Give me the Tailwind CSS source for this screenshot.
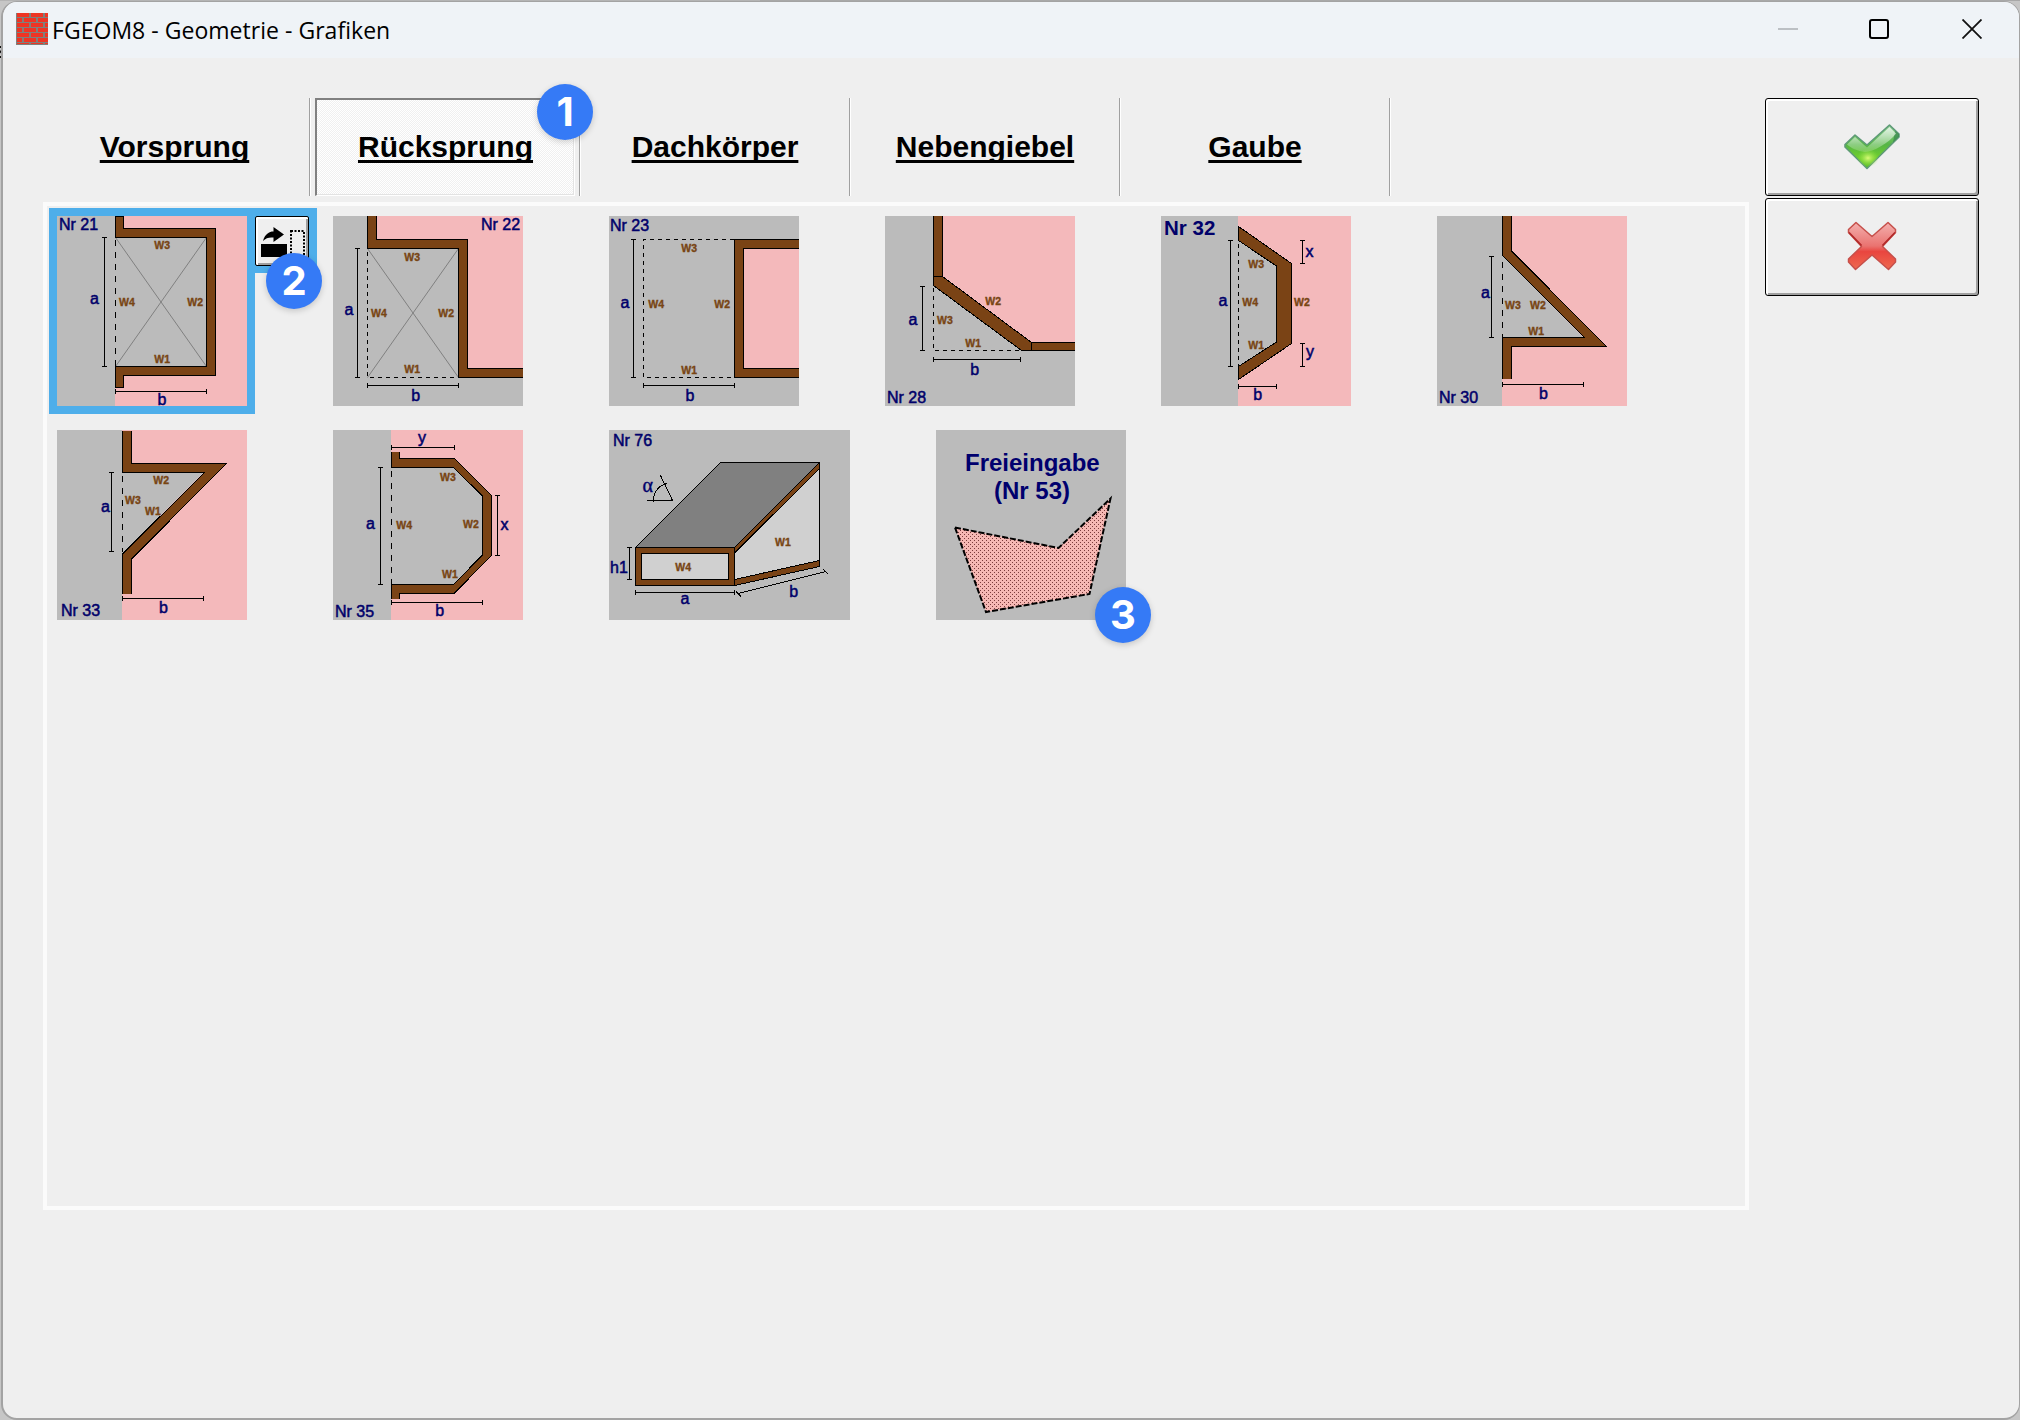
<!DOCTYPE html>
<html lang="de">
<head>
<meta charset="utf-8">
<title>FGEOM8 - Geometrie - Grafiken</title>
<script src="https://cdn.jsdelivr.net/npm/@tailwindcss/browser@4"></script>
</head>
<body class="w-[2020px] h-[1420px] pt-px overflow-hidden bg-[#c6c6c6] font-['Liberation_Sans',sans-serif] text-black relative">

<svg class="absolute left-0 top-0" width="2020" height="1420">
  <path d="M0 .5H760" stroke="#b4b4b4"/><path d="M760 .5H2020" stroke="#a8a8a8"/>
  <path d="M0 47h3M0 51l3 3M0 57h3" stroke="#111" stroke-width="2"/>
</svg>

<div class="relative ml-px w-[2019px] h-[1419px] border-2 border-r border-t border-[#a3a3a3] rounded-[16px] bg-[#efefef] overflow-hidden">

  <!-- title bar -->
  <header class="h-14 flex items-center justify-between bg-[#eff3f7] pl-[13px] pr-[37px] pb-0.5">
    <div class="flex items-center gap-1">
      <svg width="32" height="32" viewBox="0 0 32 32" shape-rendering="crispEdges">
        <defs><pattern id="bricks" width="14" height="10" patternUnits="userSpaceOnUse">
          <rect width="14" height="10" fill="#80807c"/>
          <rect x="1" y="0" width="12" height="4" fill="#ee3524"/>
          <rect x="-1" y="5" width="7" height="4" fill="#ee3524"/><rect x="8" y="5" width="7" height="4" fill="#ee3524"/>
        </pattern></defs>
        <rect width="32" height="32" fill="url(#bricks)"/>
        <path d="M.5 0V32M0 31.500H32" stroke="#80807c"/>
      </svg>
      <h1 class="font-['Open_Sans',sans-serif] text-[23px] leading-8 whitespace-nowrap tracking-[0.03px] pt-0.5">FGEOM8 - Geometrie - Grafiken</h1>
    </div>
    <div class="flex items-center gap-[73px]">
      <svg class="-mr-0.5" width="20" height="20"><path d="M0 10H20" stroke="#bcc0c4" stroke-width="2"/></svg>
      <svg width="20" height="20"><rect x="1" y="1" width="18" height="18" rx="2" fill="none" stroke="#000" stroke-width="2"/></svg>
      <svg width="20" height="20"><path d="M.5 .5 19.500 19.500M19.500 .5 .5 19.500" stroke="#111" stroke-width="1.800"/></svg>
    </div>
  </header>

  <main class="flex pt-10 pl-[38px]">
    <div>
      <nav class="flex h-[98px] text-[30px] font-bold underline-offset-[3px] decoration-[3px] [text-decoration-skip-ink:none]">
        <div class="w-[270px] border-r border-white"><div class="h-full border-r border-[#a0a0a0] flex items-center justify-center pb-0.5 pr-px"><span class="underline underline-offset-[3px] decoration-[3px]">Vorsprung</span></div></div>
        <div class="w-[270px] border-r border-white relative"><div class="h-full border-r border-[#a0a0a0] pl-1 pr-1">
          <div class="h-full border-t-2 border-l-2 border-r border-b border-t-[#808080] border-l-[#808080] border-r-white border-b-white">
            <div class="h-full border-r border-b border-[#e3e3e3] bg-[repeating-conic-gradient(#ffffff_0%_25%,#f0f0f0_0%_50%)] bg-[length:2px_2px] flex items-center justify-center pl-px pb-px"><span class="underline underline-offset-[3px] decoration-[3px]">Rücksprung</span></div>
          </div></div>
          <div class="absolute left-[226px] -top-[14px] size-14 rounded-full bg-[#357af6] shadow-[0_2px_6px_rgba(0,0,0,0.18)] flex items-center justify-center text-white text-[40px] leading-none font-bold font-['Inter',sans-serif] z-10">1</div>
        </div>
        <div class="w-[270px] border-r border-white"><div class="h-full border-r border-[#a0a0a0] flex items-center justify-center pb-0.5"><span class="underline underline-offset-[3px] decoration-[3px]">Dachkörper</span></div></div>
        <div class="w-[270px] border-r border-white"><div class="h-full border-r border-[#a0a0a0] flex items-center justify-center pb-0.5"><span class="underline underline-offset-[3px] decoration-[3px]">Nebengiebel</span></div></div>
        <div class="w-[270px] border-r border-white"><div class="h-full border-r border-[#a0a0a0] flex items-center justify-center pb-0.5"><span class="underline underline-offset-[3px] decoration-[3px]">Gaube</span></div></div>
      </nav>

      <section class="mt-1.5 ml-0.5 w-[1706px] h-[1008px] border-4 border-[#fbfbfb] p-2.5 flex flex-col gap-6">
        <div class="flex gap-[86px]">

          <div class="relative size-[190px]">
            <!-- selection frame with mirror button -->
            <div class="absolute -left-2 -top-2 size-[206px] bg-[#4eaeea]"></div>
            <div class="absolute left-[198px] -top-2 w-[62px] h-[65px] bg-[#4eaeea]"></div>
            <div class="absolute left-[198px] top-0 w-[54px] h-[50px] border border-black rounded-[2px] bg-[#efefef] shadow-[inset_2px_2px_0_#fff,inset_-2px_-2px_0_#a0a0a0]">
              <svg width="52" height="48" viewBox="0 0 52 48">
                <path d="M7 24C9 17 13 14.500 17.500 14.500V10L28 17.500 17.500 25V20.500C13 20 10 21 7 24Z"/>
                <rect x="5" y="27" width="26" height="13"/>
                <path d="M35 14H48V42H35Z" fill="none" stroke="#000" stroke-width="2" stroke-dasharray="2 1.500"/>
              </svg>
            </div>
            <svg class="relative overflow-visible" width="190" height="190" viewBox="0 0 190 190">
              <rect width="190" height="190" fill="#f4b9bb"/><rect width="58" height="190" fill="#bbb"/><rect x="58" y="21" width="92" height="130" fill="#bbb"/>
              <path d="M58.500 21.500 149.500 150.500M149.500 21.500 58.500 150.500" stroke="#808080"/>
              <g stroke="#000" fill="none" shape-rendering="crispEdges">
                <path fill="#7a4315" d="M58.500 0V21.500H149.500V150.500H58.500V171H66.500V159.500H158.500V12.500H66.500V0Z"/>
                <path d="M58.500 24V150" stroke-dasharray="6 6"/>
                <path d="M47.500 21.500V150.500M45 21.500h5M45 150.500h5M58.500 175.500H149.500M58.500 173v5M149.500 173v5"/>
              </g>
              <g class="text-[16px] fill-[#00006a] stroke-[#00006a] [stroke-width:0.5px]"><text x="2" y="14">Nr 21</text><text x="33" y="88">a</text><text x="100.500" y="188.500">b</text></g>
              <g class="text-[10.5px] font-bold fill-[#784514] stroke-[#784514] [stroke-width:0.35px]"><text x="97.300" y="33">W3</text><text x="62" y="90">W4</text><text x="130.300" y="90">W2</text><text x="97.300" y="147">W1</text></g>
            </svg>
            <div class="absolute left-[209px] top-[37px] size-14 rounded-full bg-[#357af6] shadow-[0_2px_6px_rgba(0,0,0,0.18)] flex items-center justify-center text-white text-[40px] leading-none font-bold font-['Inter',sans-serif] z-10">2</div>
          </div>

          <svg width="190" height="190" viewBox="0 0 190 190">
            <rect width="190" height="190" fill="#bbb"/><path d="M43 0H190V153H134V24H43Z" fill="#f4b9bb"/>
            <path d="M34.500 32.500 125.500 161.500M125.500 32.500 34.500 161.500" stroke="#808080"/>
            <g stroke="#000" fill="none" shape-rendering="crispEdges">
              <path fill="#7a4315" d="M34.500 -1V32.500H125.500V161.500H191V152.500H134.500V23.500H43.500V-1Z"/>
              <path d="M34.500 36V161.500H125" stroke-dasharray="4 4"/>
              <path d="M24.500 32.500V161.500M22 32.500h5M22 161.500h5M34.500 169.500H125.500M34.500 167v5M125.500 167v5"/>
            </g>
            <g class="text-[16px] fill-[#00006a] stroke-[#00006a] [stroke-width:0.5px]"><text x="148" y="14">Nr 22</text><text x="11.500" y="99">a</text><text x="78.300" y="185">b</text></g>
            <g class="text-[10.5px] font-bold fill-[#784514] stroke-[#784514] [stroke-width:0.35px]"><text x="71.300" y="45">W3</text><text x="38" y="101">W4</text><text x="105.300" y="101">W2</text><text x="71.300" y="157">W1</text></g>
          </svg>

          <svg width="190" height="190" viewBox="0 0 190 190">
            <rect width="190" height="190" fill="#bbb"/><rect x="134" y="32" width="56" height="121" fill="#f4b9bb"/>
            <g stroke="#000" fill="none" shape-rendering="crispEdges">
              <path fill="#7a4315" d="M191 23.500H125.500V161.500H191V152.500H134.500V32.500H191Z"/>
              <path d="M125 23.500H34.500V161.500H125" stroke-dasharray="4 4"/>
              <path d="M24.500 23.500V161.500M22 23.500h5M22 161.500h5M34.500 169.500H125.500M34.500 167v5M125.500 167v5"/>
            </g>
            <g class="text-[16px] fill-[#00006a] stroke-[#00006a] [stroke-width:0.5px]"><text x="1" y="15">Nr 23</text><text x="11.500" y="92">a</text><text x="76.500" y="185">b</text></g>
            <g class="text-[10.5px] font-bold fill-[#784514] stroke-[#784514] [stroke-width:0.35px]"><text x="72.300" y="36">W3</text><text x="39.300" y="92">W4</text><text x="105.300" y="92">W2</text><text x="72.300" y="158">W1</text></g>
          </svg>

          <svg width="190" height="190" viewBox="0 0 190 190">
            <rect width="190" height="190" fill="#bbb"/><path d="M57 0H190V127H146L57 61Z" fill="#f4b9bb"/>
            <g stroke="#000" fill="none" shape-rendering="crispEdges">
              <path fill="#7a4315" d="M48.500 -1V60.500H57.500V-1ZM48.500 60.500H57.500L146.500 126.500V134.500H136.500L48.500 69.500ZM191 126.500H146.500V134.500H191Z"/>
              <path d="M48.500 72V134.500H136" stroke-dasharray="4 4"/>
              <path d="M37.500 70.500V134.500M35 70.500h5M35 134.500h5M48.500 143.500H135.500M48.500 141v5M135.500 141v5"/>
            </g>
            <g class="text-[16px] fill-[#00006a] stroke-[#00006a] [stroke-width:0.5px]"><text x="2" y="186.500">Nr 28</text><text x="23.500" y="109">a</text><text x="85.300" y="159">b</text></g>
            <g class="text-[10.5px] font-bold fill-[#784514] stroke-[#784514] [stroke-width:0.35px]"><text x="52" y="108">W3</text><text x="100.300" y="89">W2</text><text x="80.300" y="131">W1</text></g>
          </svg>

          <svg width="190" height="190" viewBox="0 0 190 190">
            <rect width="190" height="190" fill="#f4b9bb"/><rect width="77" height="190" fill="#bbb"/><path d="M77 24 116 50V126L77 151Z" fill="#bbb"/>
            <g stroke="#000" fill="none" shape-rendering="crispEdges">
              <path fill="#7a4315" d="M77.500 10.500 130.500 47.500V127.500L77.500 163.500V150.500L115.500 126V50L77.500 24.500Z"/>
              <path d="M77.500 28V150" stroke-dasharray="4 4"/>
              <path d="M69.500 24.500V150.500M67 24.500h5M67 150.500h5M77.500 170.500H115.500M77.500 168v5M115.500 168v5M141.500 24.500V47.500M139 24.500h5M139 47.500h5M141.500 127.500V150.500M139 127.500h5M139 150.500h5"/>
            </g>
            <text class="text-[20.5px] font-bold fill-[#00006a]" x="3" y="19">Nr 32</text>
            <g class="text-[16px] fill-[#00006a] stroke-[#00006a] [stroke-width:0.5px]"><text x="57.500" y="90">a</text><text x="144.500" y="41">x</text><text x="145" y="141">y</text><text x="92.300" y="184">b</text></g>
            <g class="text-[10.5px] font-bold fill-[#784514] stroke-[#784514] [stroke-width:0.35px]"><text x="87.300" y="52">W3</text><text x="81.300" y="90">W4</text><text x="133" y="90">W2</text><text x="87.300" y="133">W1</text></g>
          </svg>

          <svg width="190" height="190" viewBox="0 0 190 190">
            <rect width="190" height="190" fill="#f4b9bb"/><rect width="65" height="190" fill="#bbb"/><path d="M65 39 147 122H65Z" fill="#bbb"/>
            <path fill="#7a4315" shape-rendering="crispEdges" d="M65.500 0V39.500L147.500 121.500H65.500V163H74.500V130.500H169.500L74.500 35V0Z"/>
            <g stroke="#000" fill="none" shape-rendering="crispEdges">
              <path d="M65.500 0V39.500L147.500 121.500H65.500V163M74.500 163V130.500H169.500L74.500 35V0"/>
              <path d="M65.500 46V121" stroke-dasharray="6 6"/>
              <path d="M54.500 40.500V121.500M52 40.500h5M52 121.500h5M65.500 168.500H146.500M65.500 166v5M146.500 166v5"/>
            </g>
            <g class="text-[16px] fill-[#00006a] stroke-[#00006a] [stroke-width:0.5px]"><text x="44" y="82">a</text><text x="102" y="183">b</text><text x="2" y="186.500">Nr 30</text></g>
            <g class="text-[10.5px] font-bold fill-[#784514] stroke-[#784514] [stroke-width:0.35px]"><text x="68" y="93">W3</text><text x="93" y="93">W2</text><text x="91.300" y="119">W1</text></g>
          </svg>
        </div>

        <div class="flex gap-[86px]">
          <svg width="190" height="190" viewBox="0 0 190 190">
            <rect width="190" height="190" fill="#f4b9bb"/><rect width="65" height="190" fill="#bbb"/><path d="M65 42H147L65 124Z" fill="#bbb"/>
            <path fill="#7a4315" shape-rendering="crispEdges" d="M65.500 1V42.500H147.500L65.500 124V164H74.500V129L169.500 33.500H74.500V1Z"/>
            <g stroke="#000" fill="none" shape-rendering="crispEdges">
              <path d="M65.500 1V42.500H147.500L65.500 124V164M74.500 164V129L169.500 33.500H74.500V1"/>
              <path d="M65.500 46V122" stroke-dasharray="6 6"/>
              <path d="M54.500 42.500V121.500M52 42.500h5M52 121.500h5M65.500 168.500H146.500M65.500 166v5M146.500 166v5"/>
            </g>
            <g class="text-[16px] fill-[#00006a] stroke-[#00006a] [stroke-width:0.5px]"><text x="44" y="82">a</text><text x="102" y="183">b</text><text x="4" y="185.500">Nr 33</text></g>
            <g class="text-[10.5px] font-bold fill-[#784514] stroke-[#784514] [stroke-width:0.35px]"><text x="96.300" y="54">W2</text><text x="68" y="73.500">W3</text><text x="88" y="84.500">W1</text></g>
          </svg>

          <svg class="overflow-visible" width="190" height="190" viewBox="0 0 190 190">
            <rect width="190" height="190" fill="#f4b9bb"/><rect width="58" height="190" fill="#bbb"/><path d="M58 37H121L150 66V125L121 155H58Z" fill="#bbb"/>
            <path fill="#7a4315" shape-rendering="crispEdges" d="M58.500 22H66.500V28.500H121.500L158.500 65.500V125.500L121 163.500H66.500V169H58.500V154.500H120.500L149.500 125V66L120.500 37.500H58.500Z"/>
            <g stroke="#000" fill="none" shape-rendering="crispEdges">
              <path d="M66.500 22V28.500H121.500L158.500 65.500V125.500L121 163.500H66.500V169M58.500 169V154.500H120.500L149.500 125V66L120.500 37.500H58.500V22"/>
              <path d="M58.500 41V154" stroke-dasharray="6 6"/>
              <path d="M47.500 37.500V154.500M45 37.500h5M45 154.500h5M58.500 172.500H149.500M58.500 170v5M149.500 170v5M58.500 17.500H121.500M58.500 15v5M121.500 15v5M164.500 65.500V125.500M162 65.500h5M162 125.500h5"/>
            </g>
            <g class="text-[16px] fill-[#00006a] stroke-[#00006a] [stroke-width:0.5px]"><text x="85" y="12.500">y</text><text x="33" y="99">a</text><text x="167.500" y="100">x</text><text x="102.300" y="186">b</text><text x="2" y="186.500">Nr 35</text></g>
            <g class="text-[10.5px] font-bold fill-[#784514] stroke-[#784514] [stroke-width:0.35px]"><text x="107" y="51">W3</text><text x="63.300" y="99">W4</text><text x="130" y="98">W2</text><text x="109" y="147.500">W1</text></g>
          </svg>

          <svg width="241" height="190" viewBox="0 0 241 190">
            <rect width="241" height="190" fill="#bbb"/>
            <g stroke="#000" fill="none" shape-rendering="crispEdges">
              <path fill="#808080" d="M26.500 117.500 111.500 32.500H210.500L125.500 117.500Z"/>
              <path fill="#d0d0d0" d="M125.500 122 210.500 38V131L125.500 150Z"/>
              <path fill="#7a4315" d="M125.500 117.500 210.500 32.500V38.500L125.500 123ZM125.500 149.500 210.500 130.500V136.500L125.500 155.500Z"/>
              <path fill="#7a4315" d="M26.500 117.500H125.500V155.500H26.500Z"/>
              <path fill="#d0d0d0" d="M32.500 123.500H119.500V149.500H32.500Z"/>
              <path d="M20.500 117.500V149.500M18 117.500h5M18 149.500h5M26.500 162.500H125.500M26.500 160v5M125.500 160v5M129 163.500 217 141.500M127 161.500l5 5M214.500 139.500l5 5"/>
              <path d="M38 70.500H63.500L51.500 45.500M44.500 72C44 62 50 55 58.500 53.500"/>
            </g>
            <text class="text-[20px] font-['Liberation_Serif',serif] fill-[#00006a] stroke-[#00006a] [stroke-width:0.4px]" x="33.500" y="61.500">α</text>
            <g class="text-[16px] fill-[#00006a] stroke-[#00006a] [stroke-width:0.5px]"><text x="4" y="15.500">Nr 76</text><text x="1" y="143">h1</text><text x="71.500" y="173.500">a</text><text x="180.300" y="167">b</text></g>
            <g class="text-[10.5px] font-bold fill-[#784514] stroke-[#784514] [stroke-width:0.35px]"><text x="166" y="115.500">W1</text><text x="66.300" y="140.500">W4</text></g>
          </svg>

          <div class="relative">
            <svg width="190" height="190" viewBox="0 0 190 190">
              <defs><pattern id="dots" width="4" height="4" patternUnits="userSpaceOnUse">
                <rect width="4" height="4" fill="#f6b8b4"/><rect width="1" height="1" fill="#7a3c3c"/><rect x="2" y="2" width="1" height="1" fill="#7a3c3c"/>
              </pattern></defs>
              <rect width="190" height="190" fill="#bbb"/>
              <path d="M19 97.500 122.500 118 174.500 68.500 153.500 164 50 182Z" fill="url(#dots)" stroke="#000" stroke-width="2" stroke-dasharray="6 2"/>
              <g class="text-[24px] font-bold fill-[#00006e]"><text x="29" y="41">Freieingabe</text><text x="58" y="69">(Nr 53)</text></g>
            </svg>
            <div class="absolute left-[159px] top-[157px] size-14 rounded-full bg-[#357af6] shadow-[0_2px_6px_rgba(0,0,0,0.18)] flex items-center justify-center text-white text-[40px] leading-none font-bold font-['Inter',sans-serif]">3</div>
          </div>
        </div>
      </section>
    </div>

    <div class="ml-4 flex flex-col gap-0.5">
      <button class="w-[214px] h-[98px] border border-black rounded-[3px] shadow-[inset_2px_2px_0_#fff,inset_-2px_-2px_0_#a0a0a0] flex items-center justify-center pr-px" aria-label="OK">
        <svg width="58" height="48" viewBox="0 0 58 48">
          <defs>
            <linearGradient id="gr" x1="0" y1="0" x2="0" y2="1"><stop offset="0" stop-color="#8fcf96"/><stop offset=".45" stop-color="#55b545"/><stop offset=".75" stop-color="#6fcf2c"/><stop offset="1" stop-color="#58b82c"/></linearGradient>
            <radialGradient id="gl"><stop offset="0" stop-color="#d8fa78"/><stop offset="1" stop-color="#8ae03a" stop-opacity="0"/></radialGradient>
            <linearGradient id="gs" x1="0" y1="0" x2="0" y2="1"><stop offset="0" stop-color="#fff" stop-opacity=".75"/><stop offset="1" stop-color="#fff" stop-opacity=".15"/></linearGradient>
          </defs>
          <path d="M2 21.500 12 12 24 22 46.500 2 56 11V14L24 45.500 2 24Z" fill="url(#gr)" stroke="#5f9a78" stroke-width="1.600" stroke-linejoin="round"/>
          <path d="M50 19.500 56 13.500V11L52 8Z" fill="#2f7d48" opacity=".6"/>
          <ellipse cx="25" cy="35" rx="11" ry="9" fill="url(#gl)"/>
          <path d="M4 21.500 12 14 24 24.500 46.500 4 53 10.500C46 20 30 29 22 29 14 28 8 25 4 21.500Z" fill="url(#gs)"/>
        </svg>
      </button>
      <button class="w-[214px] h-[98px] border border-black rounded-[3px] shadow-[inset_2px_2px_0_#fff,inset_-2px_-2px_0_#a0a0a0] flex items-center justify-center pb-0.5 pr-px" aria-label="Abbrechen">
        <svg width="50" height="50" viewBox="0 0 50 50">
          <defs><linearGradient id="rd" x1="0" y1="0" x2="0" y2="1"><stop offset="0" stop-color="#f3b0ae"/><stop offset=".5" stop-color="#ea7370"/><stop offset=".62" stop-color="#e9453f"/><stop offset="1" stop-color="#ee6a50"/></linearGradient></defs>
          <path d="M9 1.500 25 15.500 41 1.500 48.500 8.500V11.500L35.500 25.500 48.500 38V41L41.500 48.500 25 34 8.500 48.500 1.500 41V38L14.500 25.500 1.500 11.500V8.500Z" fill="url(#rd)" stroke="#c6504b" stroke-width="1.500" stroke-linejoin="round"/>
          <path d="M2 11.500 14.500 24.500M48 11.500 35.500 24.500" stroke="#b22a2a" stroke-width="1.800"/>
        </svg>
      </button>
    </div>
  </main>
</div>
</body>
</html>
